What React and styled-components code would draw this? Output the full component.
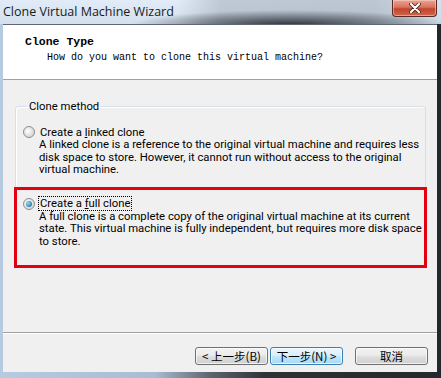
import styled, { createGlobalStyle } from "styled-components";

const GlobalStyle = createGlobalStyle`
    html, body {
        margin: 0;
        padding: 0;
        background: #2b2f34;
    }
`;

const Window = styled.div`
    width: 441px;
    height: 378px;
    display: flex;
    flex-direction: column;
    box-sizing: border-box;
    padding: 0 4px 6px 3px;
    background:
        linear-gradient(to right, #b7cbe0 0%, #a9bdd2 35%, #5b636c 48%, #2f3338 60%, #24272b 100%);
    font-family: Roboto, "Noto Sans", sans-serif;
    overflow: hidden;
`;

const TitleBar = styled.div`
    height: 24px;
    margin: 0 -4px 0 -3px;
    display: flex;
    align-items: flex-start;
    justify-content: space-between;
    background:
        radial-gradient(ellipse 160px 15px at 290px 25px, rgba(40, 45, 51, 0.97), rgba(40, 45, 51, 0) 100%),
        linear-gradient(to right, rgba(220, 232, 245, 0) 0%, rgba(220, 232, 245, 0) 40%, rgba(150, 160, 172, 0.45) 50%, rgba(120, 130, 142, 0.35) 85%, rgba(190, 205, 222, 0.3) 100%),
        linear-gradient(#e2ecf7, #d3e0ee);
`;

const Title = styled.span`
    font-family: "Open Sans", "Noto Sans", sans-serif;
    font-size: 12.5px;
    color: #1a1a1a;
    padding: 3px 0 0 3px;
    white-space: nowrap;
`;

const CloseButton = styled.div`
    width: 45px;
    height: 17px;
    margin-right: 4px;
    box-sizing: border-box;
    border: 1px solid #5a2a22;
    border-top: none;
    border-radius: 0 0 4px 4px;
    background: linear-gradient(#e9a596 0%, #d9715d 45%, #c2452e 55%, #d0664b 100%);
    box-shadow: inset 0 0 0 1px rgba(255, 220, 210, 0.5);
    display: flex;
    align-items: center;
    justify-content: center;
`;

const Client = styled.div`
    flex: 1;
    display: flex;
    flex-direction: column;
    background: #f0f0f0;
    border-top: 1px solid #5f6870;
`;

const Header = styled.div`
    height: 55px;
    background: #ffffff;
    border-bottom: 1px solid #a0a0a0;
    box-sizing: border-box;
    padding: 10px 0 0 22px;
    font-family: "Liberation Mono", "DejaVu Sans Mono", monospace;
    color: #000;
`;

const HeaderTitle = styled.div`
    font-weight: bold;
    font-size: 11.5px;
    line-height: 14px;
`;

const HeaderSub = styled.div`
    font-size: 10px;
    line-height: 14px;
    padding: 2px 0 0 22px;
`;

const Body = styled.div`
    flex: 1;
    display: flex;
    flex-direction: column;
    font-size: 11.3px;
    color: #000;
`;

const Group = styled.fieldset`
    margin: 20px 11px 0 12px;
    padding: 12px 8px 0 7px;
    min-width: 0;
    border: 1px solid #d5dfe5;
    border-radius: 3px;
    box-shadow: inset 1px 1px 0 #ffffff;
`;

const Legend = styled.legend`
    padding: 0 2px;
    margin-left: 4px;
    line-height: 13px;
`;

const Option = styled.div`
    display: flex;
    flex-direction: column;
`;

const Highlight = styled.div`
    margin: 10px -10px -1px -9px;
    padding: 7px 7px 17px 6px;
    border: 3px solid #e3000f;
`;

const OptionLabel = styled.div`
    display: flex;
    align-items: center;
    gap: 3px;
    height: 14px;
`;

const Radio = styled.span`
    width: 12px;
    height: 12px;
    border-radius: 50%;
    box-sizing: border-box;
    border: 1px solid #8e8f8f;
    background: radial-gradient(circle at 40% 40%, #ffffff, #d4d4d4 75%);
    display: flex;
    align-items: center;
    justify-content: center;
    &::after {
        content: "";
        width: 6px;
        height: 6px;
        border-radius: 50%;
        background: ${(p) => (p.$checked ? "radial-gradient(circle at 35% 35%, #8fdcfb, #0b5a8e)" : "transparent")};
    }
`;

const LabelText = styled.span`
    padding: 0 1px;
    line-height: 13px;
    border: 1px dotted ${(p) => (p.$focus ? "#000" : "transparent")};
    white-space: nowrap;
`;

const Desc = styled.div`
    padding-left: 16px;
    line-height: 12.5px;
    white-space: nowrap;
`;

const Footer = styled.div`
    margin-top: auto;
    border-top: 1px solid #a0a0a0;
    box-shadow: inset 0 1px 0 #ffffff;
    height: 40px;
    box-sizing: border-box;
    display: flex;
    justify-content: flex-end;
    align-items: flex-start;
    padding: 14px 9px 0 0;
    gap: 2px;
`;

const Button = styled.button`
    width: 73px;
    height: 18px;
    margin-left: ${(p) => p.$gap || 0}px;
    padding: 0;
    border-radius: 3px;
    font-family: "Noto Sans CJK SC", "Noto Sans", sans-serif;
    font-size: 11.5px;
    line-height: 14px;
    color: #000;
    border: 1px solid ${(p) => (p.$active ? "#3c7fb1" : "#707070")};
    background: ${(p) =>
        p.$active
            ? "linear-gradient(#eaf6fd 0%, #d9f0fc 45%, #bee6fd 55%, #a7d9f5 100%)"
            : "linear-gradient(#f2f2f2 0%, #ebebeb 45%, #dddddd 55%, #cfcfcf 100%)"};
    box-shadow: inset 0 0 0 1px rgba(255, 255, 255, 0.7);
`;

export default function App() {
    return (
        <>
            <GlobalStyle />
            <Window>
                <TitleBar>
                    <Title>Clone Virtual Machine Wizard</Title>
                    <CloseButton>
                        <svg width="12" height="10" viewBox="0 0 12 10">
                            <path d="M2 1 L10 9 M10 1 L2 9" stroke="#3a1a14" strokeWidth="3.6" strokeLinecap="round" />
                            <path d="M2 1 L10 9 M10 1 L2 9" stroke="#ffffff" strokeWidth="2.2" strokeLinecap="round" />
                        </svg>
                    </CloseButton>
                </TitleBar>
                <Client>
                    <Header>
                        <HeaderTitle>Clone Type</HeaderTitle>
                        <HeaderSub>How do you want to clone this virtual machine?</HeaderSub>
                    </Header>
                    <Body>
                        <Group>
                            <Legend>Clone method</Legend>
                            <Option>
                                <OptionLabel>
                                    <Radio />
                                    <LabelText>Create a <u>l</u>inked clone</LabelText>
                                </OptionLabel>
                                <Desc>A linked clone is a reference to the original virtual machine and requires less</Desc>
                                <Desc>disk space to store. However, it cannot run without access to the original</Desc>
                                <Desc>virtual machine.</Desc>
                            </Option>
                            <Highlight>
                                <Option>
                                    <OptionLabel>
                                        <Radio $checked />
                                        <LabelText $focus>Create a <u>f</u>ull clone</LabelText>
                                    </OptionLabel>
                                    <Desc>A full clone is a complete copy of the original virtual machine at its current</Desc>
                                    <Desc>state. This virtual machine is fully independent, but requires more disk space</Desc>
                                    <Desc>to store.</Desc>
                                </Option>
                            </Highlight>
                        </Group>
                        <Footer>
                            <Button>&lt; 上一步(B)</Button>
                            <Button $active>下一步(N) &gt;</Button>
                            <Button $gap={10}>取消</Button>
                        </Footer>
                    </Body>
                </Client>
            </Window>
        </>
    );
}
